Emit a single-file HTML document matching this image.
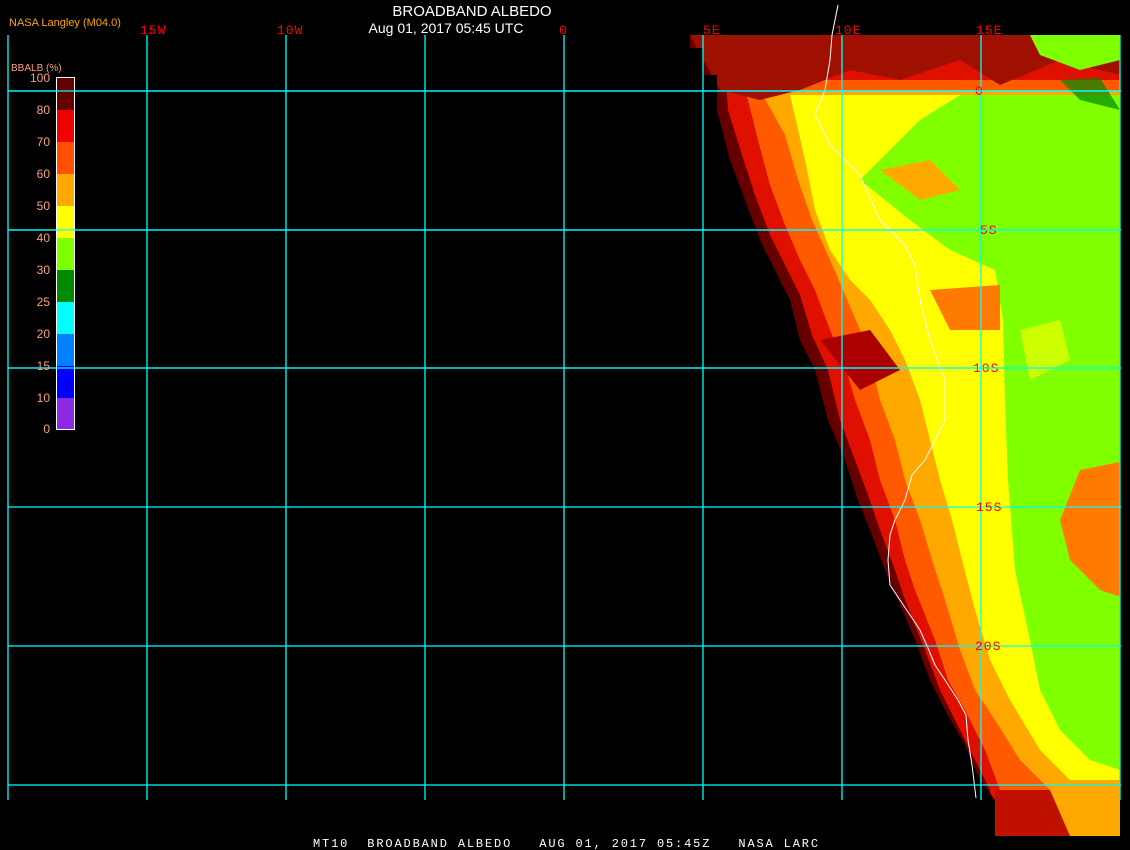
<!DOCTYPE html><html><head><style>body{margin:0;background:#000;width:1130px;height:850px;overflow:hidden}svg{display:block}</style></head><body>
<svg width="1130" height="850" viewBox="0 0 1130 850" xmlns="http://www.w3.org/2000/svg" font-family="Liberation Sans, sans-serif">
<rect width="1130" height="850" fill="#000"/>
<defs>
<clipPath id="c"><polygon points="690,35 1120,35 1120,836 995,836 995,800 980,780 965,745 945,710 930,680 915,640 900,605 887,575 870,530 858,500 845,460 828,420 815,370 800,340 790,300 775,270 760,240 745,200 730,160 717,110 717,75 703,75 703,48 690,48"/></clipPath>
</defs>
<g clip-path="url(#c)">
<rect x="680" y="30" width="450" height="810" fill="#660000"/>
<polygon points="700,30 1130,30 1130,840 1000,840 990,790 975,760 955,720 940,690 925,650 905,600 895,570 880,530 868,495 855,460 840,420 828,370 812,335 800,295 785,265 770,235 755,195 742,155 728,110 725,70 712,50" fill="#e01000"/>
<polygon points="740,80 1130,80 1130,840 1010,840 1000,790 985,750 965,710 948,680 935,640 915,590 905,560 895,520 880,480 870,440 855,400 845,365 830,330 815,290 800,260 785,225 770,185 758,140 748,100" fill="#ff5a00"/>
<polygon points="760,90 1130,90 1130,800 1050,790 1020,760 995,720 975,690 960,650 945,600 932,560 920,520 905,480 895,440 880,400 870,360 860,330 845,295 830,260 812,220 798,180 785,135" fill="#ffa800"/>
<polygon points="790,95 1130,95 1130,780 1070,780 1040,750 1010,700 990,660 975,610 962,560 952,520 940,480 930,440 920,400 905,360 890,330 870,300 850,280 830,250 815,210 805,160" fill="#ffff00"/>
<polygon points="860,180 920,120 960,95 1120,95 1120,770 1090,760 1060,730 1040,690 1030,640 1015,570 1008,480 1005,400 1003,320 995,270 950,250 910,220" fill="#80ff00"/>
<polygon points="1080,470 1130,460 1130,600 1100,590 1070,560 1060,520" fill="#ff7a00"/>
<polygon points="1020,330 1060,320 1070,360 1030,380" fill="#ffff00" opacity=".6"/>
<polygon points="690,35 1120,35 1120,75 1060,60 1000,85 960,60 900,80 850,70 800,90 760,100 720,90" fill="#a01000"/>
<polygon points="1030,35 1120,35 1120,60 1080,70 1040,55" fill="#80ff00"/>
<polygon points="1060,80 1100,78 1120,110 1080,100" fill="#008800" opacity=".7"/>
<polygon points="880,170 930,160 960,190 920,200" fill="#ffa800"/>
<polygon points="930,290 1000,285 1000,330 950,330" fill="#ff7a00"/>
<polygon points="820,340 870,330 900,370 860,390" fill="#aa0000"/>
<polygon points="1000,790 1120,790 1120,836 995,836" fill="#ffa800"/>
<polygon points="995,790 1050,790 1070,836 995,836" fill="#c01000"/>
</g>
<path d="M838,5 L832,35 L830,60 L825,90 L815,115 L830,145 L860,175 L880,220 L905,245 L915,265 L920,300 L930,340 L945,380 L945,420 L935,440 L925,460 L912,475 L905,500 L895,520 L890,535 L888,560 L890,585 L900,600 L910,615 L920,630 L928,648 L935,665 L945,680 L958,700 L966,715 L968,740 L972,765 L976,798" fill="none" stroke="#fff" stroke-width="1"/>
<g stroke="#00ffff" stroke-width="1.3">
<line x1="8" y1="91" x2="1121" y2="91"/><line x1="8" y1="230" x2="1121" y2="230"/><line x1="8" y1="368" x2="1121" y2="368"/><line x1="8" y1="507" x2="1121" y2="507"/><line x1="8" y1="646" x2="1121" y2="646"/><line x1="8" y1="785" x2="1121" y2="785"/>
<line x1="8" y1="35" x2="8" y2="800"/><line x1="147" y1="35" x2="147" y2="800"/><line x1="286" y1="35" x2="286" y2="800"/><line x1="425" y1="35" x2="425" y2="800"/><line x1="564" y1="35" x2="564" y2="800"/><line x1="703" y1="35" x2="703" y2="800"/><line x1="842" y1="35" x2="842" y2="800"/><line x1="981" y1="35" x2="981" y2="800"/><line x1="1120" y1="35" x2="1120" y2="800"/>
</g>
<text x="472" y="16" fill="#fff" font-size="15" text-anchor="middle">BROADBAND ALBEDO</text>
<text x="446" y="33" fill="#fff" font-size="14" text-anchor="middle">Aug 01, 2017 05:45 UTC</text>
<text x="9" y="26" fill="#ffa500" font-size="11">NASA Langley (M04.0)</text>
<g fill="#ff0000" font-size="13" font-family="Liberation Mono, monospace" letter-spacing="1">
<text x="140" y="34">15W</text><text x="277" y="34">10W</text><text x="559" y="34">0</text><text x="703" y="34">5E</text><text x="835" y="34">10E</text><text x="976" y="34">15E</text>
</g>
<g font-size="13" font-family="Liberation Mono, monospace" fill="#ff0000" letter-spacing="1">
<text x="975" y="95">0</text>
<text x="980" y="234">5S</text>
<text x="973" y="372">10S</text>
<text x="976" y="511">15S</text>
<text x="975" y="650">20S</text>
</g>
<text x="11" y="71" fill="#ffa07a" font-size="10">BBALB (%)</text>
<rect x="56" y="77" width="19" height="353" fill="#fff"/>
<rect x="57" y="78" width="17" height="32" fill="#660000"/>
<rect x="57" y="110" width="17" height="32" fill="#f00000"/>
<rect x="57" y="142" width="17" height="32" fill="#ff5000"/>
<rect x="57" y="174" width="17" height="32" fill="#ffa800"/>
<rect x="57" y="206" width="17" height="32" fill="#ffff00"/>
<rect x="57" y="238" width="17" height="32" fill="#80ff00"/>
<rect x="57" y="270" width="17" height="32" fill="#008800"/>
<rect x="57" y="302" width="17" height="32" fill="#00ffff"/>
<rect x="57" y="334" width="17" height="32" fill="#0080ff"/>
<rect x="57" y="366" width="17" height="32" fill="#0000ff"/>
<rect x="57" y="398" width="17" height="31" fill="#8a2be2"/>
<line x1="8" y1="91" x2="1121" y2="91" stroke="#00ffff" stroke-width="1.3"/>
<line x1="8" y1="230" x2="1121" y2="230" stroke="#00ffff" stroke-width="1.3"/>
<line x1="8" y1="368" x2="1121" y2="368" stroke="#00ffff" stroke-width="1.3"/>
<g fill="#ffa07a" font-size="12" text-anchor="end">
<text x="50" y="82">100</text><text x="50" y="114">80</text><text x="50" y="146">70</text><text x="50" y="178">60</text><text x="50" y="210">50</text><text x="50" y="242">40</text><text x="50" y="274">30</text><text x="50" y="306">25</text><text x="50" y="338">20</text><text x="50" y="370">15</text><text x="50" y="402">10</text><text x="50" y="433">0</text>
</g>
<text x="313" y="847" fill="#fff" font-size="12" font-family="Liberation Mono, monospace" letter-spacing="1.85" xml:space="preserve">MT10  BROADBAND ALBEDO   AUG 01, 2017 05:45Z   NASA LARC</text>
</svg>
</body></html>
